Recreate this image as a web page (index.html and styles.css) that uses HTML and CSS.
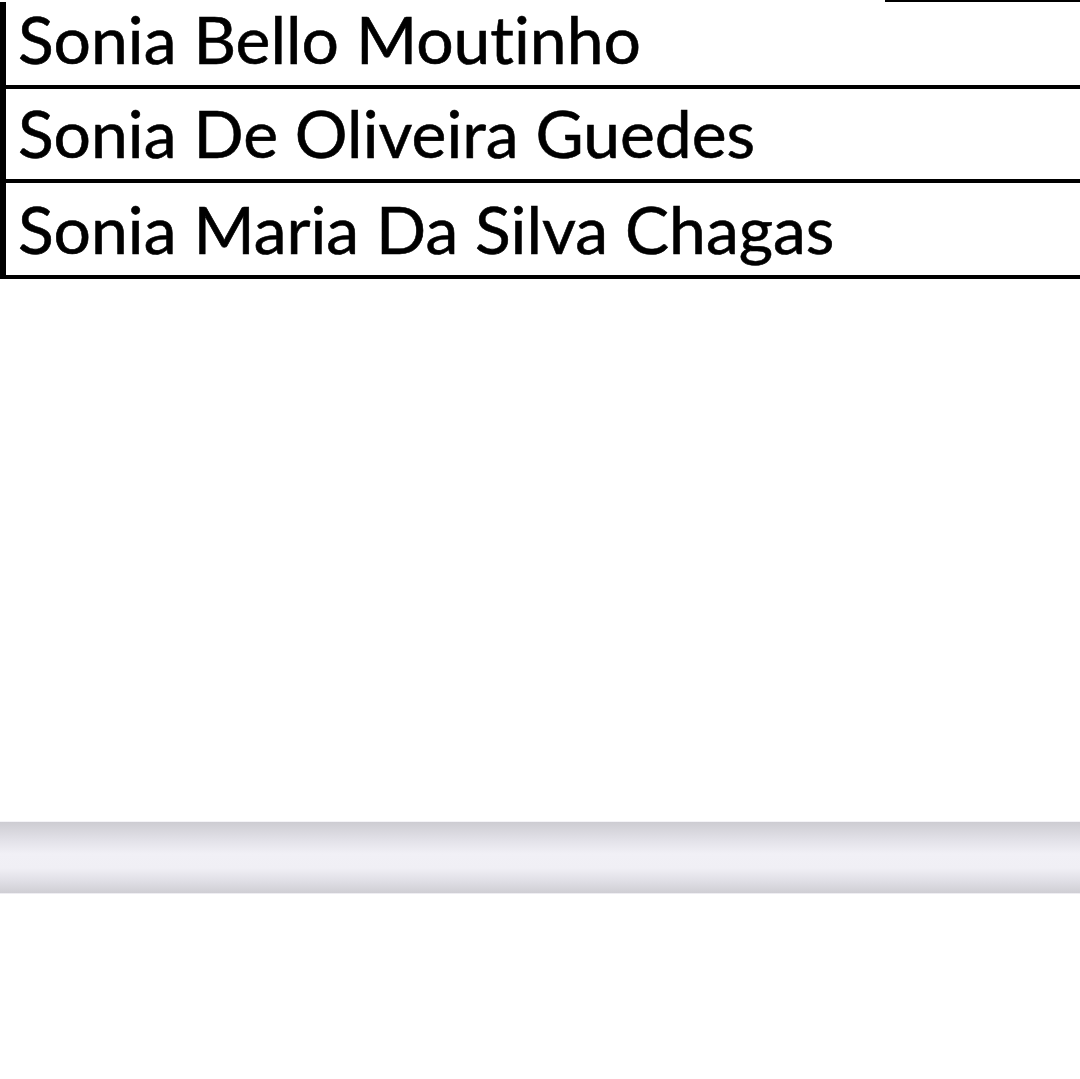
FILE: index.html
```html
<!DOCTYPE html>
<html lang="pt">
<head>
<meta charset="utf-8">
<title>Lista</title>
<link rel="stylesheet" href="styles.css">
</head>
<body>
<div class="sheet">
  <div class="top-edge"><span class="top-edge-line"></span></div>
  <div class="table">
    <div class="row row-1"><span class="cell">Sonia Bello Moutinho</span></div>
    <div class="row row-2"><span class="cell">Sonia De Oliveira Guedes</span></div>
    <div class="row row-3"><span class="cell">Sonia Maria Da Silva Chagas</span></div>
  </div>
  <div class="bar"></div>
</div>
</body>
</html>
```
FILE: styles.css
```css
html, body {
  margin: 0;
  padding: 0;
  background: #fff;
}
.sheet {
  width: 1080px;
  height: 1079px;
  overflow: hidden;
  display: flex;
  flex-direction: column;
}
.top-edge {
  height: 2px;
  display: flex;
}
.top-edge-line {
  margin-left: 885px;
  flex: 1;
  background: #000;
}
.table {
  border-left: 6px solid #000;
  display: flex;
  flex-direction: column;
}
.row {
  border-bottom: 4px solid #000;
  display: flex;
  align-items: flex-end;
  box-sizing: border-box;
  font-family: Lato, "Open Sans", sans-serif;
  font-size: 66px;
  font-variant-ligatures: none;
  -webkit-text-stroke: 0.6px #000;
  color: #000;
  padding-left: 12px;
}
.row-1 { height: 87px; }
.row-2 { height: 94px; }
.row-3 { height: 96px; }
.cell {
  display: block;
  line-height: 1;
  padding-bottom: 13px;
}
.bar {
  margin-top: 542px;
  height: 73px;
  box-sizing: border-box;
  border-top: 1px solid #f4f3f7;
  border-bottom: 1px solid #eeedf2;
  background: linear-gradient(to bottom, #cdccd2 0%, #e2e1e8 25%, #f1f0f6 45%, #f0eff5 65%, #dedde4 85%, #cfced4 100%);
}
```
